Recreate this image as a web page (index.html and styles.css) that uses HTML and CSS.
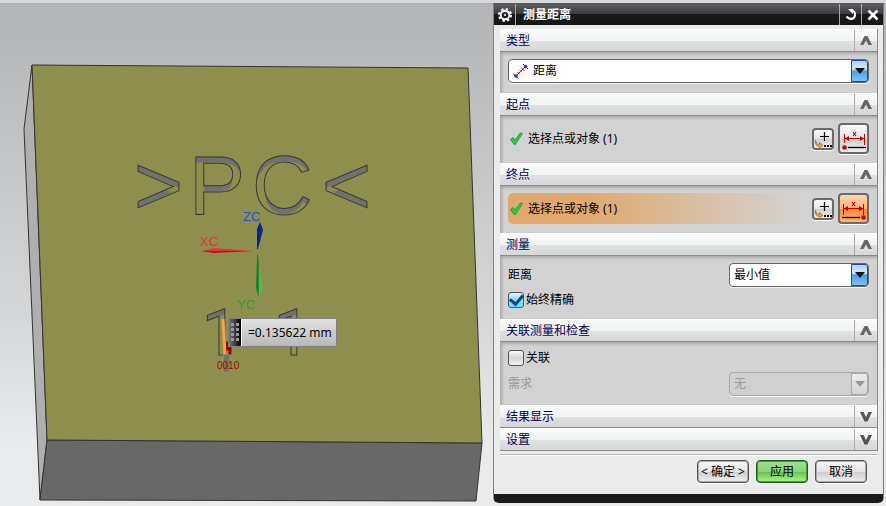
FILE: index.html
```
<!DOCTYPE html>
<html lang="zh-CN">
<head>
  <meta charset="UTF-8" />
  <meta name="viewport" content="width=device-width, initial-scale=1.0"/>
  <title>测量距离</title>
  <link rel="stylesheet" href="styles.css">
</head>
<body>
  <!-- shared symbols -->
  <svg class="symbols" width="0" height="0" aria-hidden="true">
    <symbol id="up" viewBox="0 0 12 10"><path d="M0 9 4.500 0H7.500L12 9H8.500L6 4.500 3.500 9Z" fill="#666"/></symbol>
    <symbol id="down" viewBox="0 0 12 10"><path d="M0 0H3.500L6 5 8.500 0H12L7.500 9.500H4.500Z" fill="#555"/></symbol>
    <symbol id="tick" viewBox="0 0 13 13"><path d="M.5 7.500 3 5.500 5 8 10.500 .8 12.500 1.500 5.500 12.300H4Z" fill="#1fd63c" stroke="#12952a" stroke-width=".8"/></symbol>
    <symbol id="point" viewBox="0 0 18 18">
      <path d="M10.500 2V11M6 6.500H15" stroke="#000" stroke-width="1.200"/>
      <path d="M1.500 10.500Q2 14.500 5.500 14.500V12.500L9 15.500 5.500 17.500V16.500Q1 16.500 1.500 10.500Z" fill="#ffa51f" stroke="#b4530c" stroke-width=".7"/>
      <path d="M10 15h2v2h-2zM13 15h2v2h-2zM16 15h2v2h-2z"/>
    </symbol>
    <symbol id="from" viewBox="0 0 26 24">
      <path d="M3.500 7V16M23.500 7V18M4 11.500H23" stroke="#c40000" fill="none"/>
      <path d="M4 11.500 8 9V14ZM23 11.500 19 9V14Z" fill="#c40000"/>
      <path d="M12 5 15 9M15 5 12 9" stroke="#c40000" stroke-width="1.200"/>
      <circle cx="3.500" cy="20.500" r="2.300" fill="#d20000"/>
      <path d="M7 20.500H25" stroke="#000" stroke-width="1.300"/>
    </symbol>
    <symbol id="to" viewBox="0 0 26 24">
      <path d="M2.500 7V18M22.500 7V18M3 11.500H22" stroke="#c40000" fill="none"/>
      <path d="M3 11.500 7 9V14ZM22 11.500 18 9V14Z" fill="#c40000"/>
      <path d="M11 5 14 9M14 5 11 9" stroke="#c40000" stroke-width="1.200"/>
      <circle cx="22.500" cy="20.500" r="2.300" fill="#d20000"/>
      <path d="M1 20.500H19" stroke="#000" stroke-width="1.300"/>
    </symbol>
  </svg>

  <div class="toolbar-edge"></div>
  <main class="workspace">
    <section class="viewport">
      <svg class="model" viewBox="0 4 493 502">
        <defs>
          <!-- engraved text: grey upper walls, see-through floor, dark outline.
               the red fill only separates the floor from the outline -->
          <filter id="engrave" x="-10%" y="-10%" width="120%" height="120%" color-interpolation-filters="sRGB">
            <feOffset in="SourceAlpha" dy="6" result="floor"/>
            <feComposite in="SourceAlpha" in2="floor" operator="out" result="wallShape"/>
            <feFlood flood-color="#707070"/>
            <feComposite in2="wallShape" operator="in" result="wall"/>
            <feColorMatrix in="SourceGraphic" values="0 0 0 0 .22  0 0 0 0 .22  0 0 0 0 .19  -1 0 0 1 0" result="edge"/>
            <feMerge><feMergeNode in="wall"/><feMergeNode in="edge"/></feMerge>
          </filter>
          <linearGradient id="red" x2="0" y2="1"><stop offset=".5" stop-color="#e03838"/><stop offset=".6" stop-color="#9c1c1c"/></linearGradient>
          <linearGradient id="green"><stop offset=".4" stop-color="#1e7d2a"/><stop offset=".5" stop-color="#3fc552"/></linearGradient>
        </defs>
        <g stroke="#333" stroke-linejoin="round">
          <path d="M32 65 24 129 40 500 47 440Z" fill="#afafaf"/>
          <path d="M47 440 482 443 476 501 40 500Z" fill="#686868"/>
          <path d="M32 65 468 68 482 443 47 440Z" fill="#8f8f4d"/>
        </g>
        <g class="engraved" filter="url(#engrave)">
          <text x="134" y="214">&gt;</text>
          <text x="189" y="214">P</text>
          <text x="252" y="214">C</text>
          <text x="322" y="214">&lt;</text>
          <text class="digit" x="202" y="355">1</text>
          <text class="digit" x="274" y="355">1</text>
        </g>
        <path d="M201 251 214 248 253 251 214 253Z" fill="url(#red)"/>
        <path d="M257 249V229L260 222 263 230 258 249Z" fill="#032794"/>
        <path d="M257 255 256 288 259 298 262 287 258 255Z" fill="url(#green)"/>
        <g class="axis">
          <text x="243" y="221" fill="#1c52dc">ZC</text>
          <text x="200" y="246" fill="#d83a35">XC</text>
          <text x="237" y="309" fill="#2e9d36">YC</text>
        </g>
        <path d="M223 354H230V371Q230 373 226 373 223 373 223 371Z" fill="#77774f" stroke="#96968c"/>
        <path d="M224 342H231V354H229V350H226V354" fill="#a00000" stroke="#a00000"/>
        <path d="M223 319 225 354" stroke="#ffa04a" stroke-width="3"/>
        <text class="marks" x="217" y="369" fill="#a80000">0010</text>
      </svg>
      <div class="readout">
        <span class="grip"><svg width="8" height="20"><path d="M1.500 0V20M6.500 0V20" stroke="#999" stroke-width="3" stroke-dasharray="3 2"/></svg></span>
        <output>=0.135622 mm</output>
      </div>
    </section>

    <form class="dialog">
      <header class="titlebar">
        <button type="button" class="tool" aria-label="选项"><svg width="14" height="14" viewBox="0 0 14 14"><circle cx="7" cy="7" r="4.300" fill="none" stroke="#fff" stroke-width="2"/><circle cx="7" cy="7" r="6" fill="none" stroke="#fff" stroke-width="2" stroke-dasharray="2.400 2.312"/><circle cx="7" cy="7" r="1" fill="#fff"/></svg></button>
        <h1>测量距离</h1>
        <button type="button" class="tool" aria-label="重置"><svg width="12" height="12" viewBox="0 0 12 12"><path d="M6 1.500Q10.500 2 10 6 9.500 10 5.500 9.800 3 9.500 1.500 7.500" fill="none" stroke="#fff" stroke-width="2.200"/><path d="M3 0H8V5Z" fill="#fff"/></svg></button>
        <button type="button" class="tool" aria-label="关闭"><svg width="12" height="12" viewBox="0 0 12 12"><path d="M1.500 1.500 10.500 10.500M10.500 1.500 1.500 10.500" stroke="#fff" stroke-width="2.600"/></svg></button>
      </header>

      <div class="groups">
        <section>
          <h2>类型<button type="button" aria-label="折叠类型"><svg width="12" height="10"><use href="#up"/></svg></button></h2>
          <div class="panel">
            <div class="combo with-icon">
              <svg class="type-icon" width="16" height="16" viewBox="0 0 16 16"><path d="M3 13 12 4" stroke="#d01818"/><path d="M4.500 9 7 11.500M6.500 7 9 9.500M8.500 5 11 7.500" stroke="#d01818"/><path d="M0 10.500 5 15.500M10 1 15 6" stroke="#222"/><circle cx="3" cy="13" r="1.800" fill="#2035e8"/><circle cx="12.500" cy="3.500" r="1.800" fill="#2035e8"/></svg>
              <select aria-label="类型"><option>距离</option></select>
              <span class="arrow"></span>
            </div>
          </div>
        </section>

        <section>
          <h2>起点<button type="button" aria-label="折叠起点"><svg width="12" height="10"><use href="#up"/></svg></button></h2>
          <div class="panel">
            <div class="pick">
              <svg width="13" height="13"><use href="#tick"/></svg>
              <span>选择点或对象 (1)</span>
              <button type="button" class="small" aria-label="点对话框"><svg width="18" height="18"><use href="#point"/></svg></button>
              <button type="button" class="large" aria-label="起点"><svg width="26" height="24"><use href="#from"/></svg></button>
            </div>
          </div>
        </section>

        <section>
          <h2>终点<button type="button" aria-label="折叠终点"><svg width="12" height="10"><use href="#up"/></svg></button></h2>
          <div class="panel">
            <div class="pick current">
              <svg width="13" height="13"><use href="#tick"/></svg>
              <span>选择点或对象 (1)</span>
              <button type="button" class="small" aria-label="点对话框"><svg width="18" height="18"><use href="#point"/></svg></button>
              <button type="button" class="large active" aria-label="终点"><svg width="26" height="24"><use href="#to"/></svg></button>
            </div>
          </div>
        </section>

        <section>
          <h2>测量<button type="button" aria-label="折叠测量"><svg width="12" height="10"><use href="#up"/></svg></button></h2>
          <div class="panel">
            <div class="row">
              <label for="distance">距离</label>
              <div class="combo"><select id="distance"><option>最小值</option></select><span class="arrow"></span></div>
            </div>
            <label class="check"><input type="checkbox" checked>始终精确</label>
          </div>
        </section>

        <section>
          <h2>关联测量和检查<button type="button" aria-label="折叠关联测量和检查"><svg width="12" height="10"><use href="#up"/></svg></button></h2>
          <div class="panel link-panel">
            <label class="check"><input type="checkbox">关联</label>
            <div class="row disabled">
              <label for="require">需求</label>
              <div class="combo"><select id="require" disabled><option>无</option></select><span class="arrow"></span></div>
            </div>
          </div>
        </section>

        <section>
          <h2>结果显示<button type="button" aria-label="展开结果显示"><svg width="12" height="10"><use href="#down"/></svg></button></h2>
        </section>
        <section>
          <h2>设置<button type="button" aria-label="展开设置"><svg width="12" height="10"><use href="#down"/></svg></button></h2>
        </section>
      </div>

      <footer class="actions">
        <button type="button">&lt; 确定 &gt;</button>
        <button type="button" class="apply">应用</button>
        <button type="button">取消</button>
      </footer>
    </form>
  </main>
</body>
</html>
```
FILE: styles.css
```
* {
  box-sizing: border-box;
}
body {
  margin: 0;
  min-height: 100vh;
  font-family: "Noto Sans", "Noto Sans CJK SC", sans-serif;
  font-size: 12px;
  line-height: 16px;
  color: #000;
  background: linear-gradient(#b2b3b5, #d4d5d6 60%, #e9eaeb 88%);
  overflow: hidden;
}
button, select, input {
  font: inherit;
  color: inherit;
  margin: 0;
}
button {
  display: flex;
  align-items: center;
  justify-content: center;
  padding: 0;
}
svg {
  display: block;
  flex: none;
}
.symbols {
  position: absolute;
}
.toolbar-edge {
  height: 3px;
  background: #d8d9dc;
}
.workspace {
  display: flex;
  align-items: flex-start;
  padding-right: 2px;
}

/* model view */
.viewport {
  position: relative;
  flex: 1;
  border-top: 1px solid #f0a050;
}
.model {
  width: 100%;
}
.engraved {
  font-family: "Liberation Sans", sans-serif;
  font-size: 84px;
  fill: #f00;
  stroke: #000;
}
.engraved .digit {
  font-family: Roboto, sans-serif;
  font-size: 64px;
}
.axis {
  font-family: "Liberation Sans", sans-serif;
  font-size: 13px;
}
.marks {
  font-family: "Liberation Sans", sans-serif;
  font-size: 10px;
}
.readout {
  position: absolute;
  left: 228px;
  top: 314px;
  display: flex;
  height: 29px;
  border: 1px solid #808080;
  background: linear-gradient(#e2e2e2, #b8b8b8);
}
.grip {
  display: flex;
  align-items: center;
  padding: 0 2px;
  background: linear-gradient(to right, #777, #000);
}
.readout output {
  padding: 0 4px 0 6px;
  border-left: 1px solid #fff;
  line-height: 27px;
}

/* dialog window */
.dialog {
  width: 391px;
  border: 1px solid #808080;
  border-top-color: #555;
  border-bottom: 9px solid #1b1b1b;
  border-radius: 0 0 6px 6px;
  background: #ebebec;
}
.titlebar {
  display: flex;
  height: 21px;
  color: #fff;
  background: linear-gradient(#5c5d5f, #3c3d3f 45%, #1a1a1a 50%, #161616);
}
.titlebar h1 {
  flex: 1;
  margin: 0;
  padding-left: 7px;
  font-size: 12px;
  line-height: 21px;
}
.tool {
  width: 22px;
  border: 0;
  border-left: 1px solid #aaa;
  background: none;
}
.tool:first-child {
  border-left: 0;
  border-right: 1px solid #aaa;
}
.groups {
  margin: 4px 5px 3px 6px;
  border-right: 1px solid #888;
}
.groups h2 {
  display: flex;
  justify-content: space-between;
  height: 23px;
  margin: 0;
  padding-left: 6px;
  border-top: 1px solid #fff;
  border-bottom: 1px solid #8a8b8c;
  font-size: 12px;
  font-weight: normal;
  line-height: 22px;
  color: #00004f;
  background: linear-gradient(#f9fafa, #f1f2f2 50%, #e1e2e3 51%, #d4d6d8);
}
.groups h2 button {
  width: 23px;
  border: 0;
  border-left: 1px solid #aaa;
  background: none;
}
.panel {
  padding: 7px 8px;
  background: #d2d2d2;
  box-shadow: inset 2px 2px 3px #aaa;
}
.link-panel {
  padding: 3px 8px 9px;
}
.combo {
  position: relative;
  width: 140px;
}
.combo select {
  display: block;
  width: 100%;
  height: 24px;
  padding: 0 28px 0 4px;
  border: 1px solid #666;
  border-radius: 4px;
  appearance: none;
  background: #fff;
  box-shadow: 0 1px 0 #f5f5f5;
}
.with-icon {
  width: 100%;
  margin-bottom: 3px;
}
.with-icon select {
  padding-left: 24px;
}
.type-icon {
  position: absolute;
  left: 5px;
  top: 4px;
}
.arrow {
  position: absolute;
  right: 1px;
  top: 1px;
  bottom: 1px;
  width: 17px;
  border: 1px solid #1450a8;
  border-radius: 0 3px 3px 0;
  background: linear-gradient(#b8cff0, #dce8f9 40%, #529ce6 50%, #76c4fa);
  pointer-events: none;
}
.arrow::after {
  content: "";
  position: absolute;
  left: 3px;
  top: 7px;
  border: solid transparent;
  border-width: 6px 5px 0;
  border-top-color: #151515;
}
.pick {
  display: flex;
  align-items: center;
  height: 31px;
  margin-bottom: 2px;
  padding-left: 2px;
}
.pick span {
  flex: 1;
  padding-left: 5px;
}
.pick.current {
  border-radius: 5px;
  background: linear-gradient(to right, #e1a86d 20%, #d2d2d2 82%);
}
.pick button {
  border: 2px solid #6a6a6a;
  border-radius: 4px;
  background: linear-gradient(#fafafa, #e2e2e2 50%, #cecece 52%, #eee);
  box-shadow: 0 1px 0 #fff;
}
.pick .small {
  width: 22px;
  height: 22px;
  margin-right: 4px;
}
.pick .large {
  width: 31px;
  height: 31px;
}
.pick .active {
  background: linear-gradient(#ffd6b4, #ffb276 50%, #ff8630 52%, #ffb474);
}
.row {
  display: flex;
  align-items: center;
  justify-content: space-between;
}
.check {
  display: flex;
  align-items: center;
  gap: 2px;
  height: 25px;
}
.check + .row {
  margin-top: 2px;
}
.check input {
  display: grid;
  place-content: center;
  width: 16px;
  height: 16px;
  border: 1px solid #555;
  border-radius: 3px;
  appearance: none;
  background: linear-gradient(#f8f8f8, #d5d5d8 50%, #f5f5f5);
}
.check input:checked {
  background: linear-gradient(#e3f3ff, #91d6f7 50%, #60e2ff);
}
.check input:checked::after {
  content: "";
  width: 6px;
  height: 10px;
  margin-bottom: 3px;
  border: solid #06448d;
  border-width: 0 3px 3px 0;
  transform: rotate(40deg);
}
.disabled {
  color: #999;
}
.disabled select {
  border-color: #aaa;
  background: #d0d0d0;
  opacity: 1;
}
.disabled .arrow {
  border-color: #aaa;
  background: linear-gradient(#eee, #d4d4d4);
}
.disabled .arrow::after {
  border-top-color: #999;
}
.actions {
  display: flex;
  justify-content: flex-end;
  gap: 7px;
  margin: 0 5px 0 6px;
  padding: 5px 11px 11px 0;
  border-top: 1px solid #b4b4b4;
  box-shadow: inset 0 1px 0 #fff;
}
.actions button {
  width: 52px;
  height: 23px;
  border: 1px solid #555;
  border-radius: 4px;
  white-space: nowrap;
  background: linear-gradient(#f8f8f8, #e3e3e3 50%, #ccc 52%, #f0f0f0);
  box-shadow: inset 0 0 0 1px #aaa, 0 1px 0 #fff;
}
.actions .apply {
  border-color: #18601a;
  background: linear-gradient(#a2dc94, #8ad476 50%, #64c249 52%, #b0f492);
  box-shadow: inset 0 0 0 1px #459a3a, 0 1px 0 #fff;
}
```
